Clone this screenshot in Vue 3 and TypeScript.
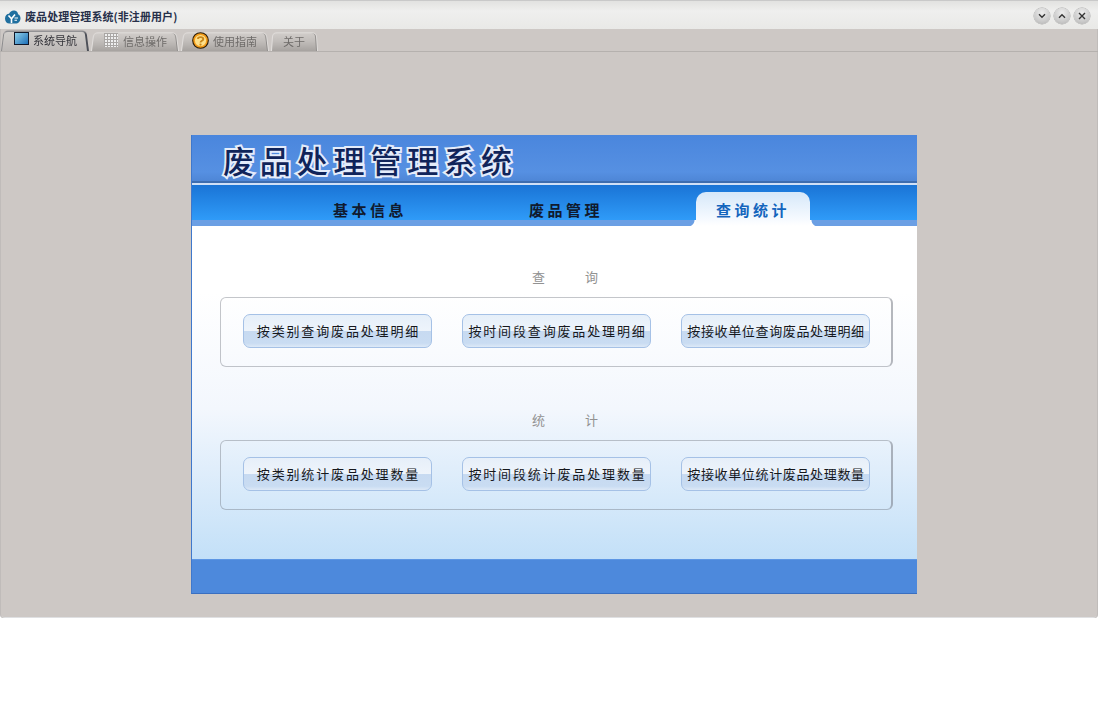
<script setup lang="ts">
interface Tab { label: string; icon: string; active?: boolean }
const tabs: Tab[] = [
  { label: '系统导航', icon: 'screen', active: true },
  { label: '信息操作', icon: 'grid' },
  { label: '使用指南', icon: 'help' },
  { label: '关于', icon: '' },
]
const navs = [
  { label: '基本信息', active: false },
  { label: '废品管理', active: false },
  { label: '查询统计', active: true },
]
const groups = [
  { title: ['查', '询'], items: ['按类别查询废品处理明细', '按时间段查询废品处理明细', '按接收单位查询废品处理明细'] },
  { title: ['统', '计'], items: ['按类别统计废品处理数量', '按时间段统计废品处理数量', '按接收单位统计废品处理数量'] },
]
</script>

<template>
  <div class="page">
    <div class="window">
      <header class="titlebar">
        <svg class="logo" width="17" height="15" viewBox="0 0 17 15">
          <path d="M1 9.5C1 6.5 3 4.8 5 4.8C6 2.2 8.5 1 10.5 1.5C13 2 14 3.8 14 5.2C15.6 5.8 16.5 7.4 16.5 9.2C16.5 12.2 14.5 14.5 11.5 14.5H5.5C2.8 14.5 1 12.5 1 9.5Z" fill="#1f6f9f" />
          <path d="M4.5 6.5L7.5 9.8M11 5.5L7.5 9.8V14" stroke="#fff" stroke-width="1.6" fill="none" />
          <path d="M10.5 9H14M10.5 11.2H13" stroke="#fff" stroke-width="1.1" fill="none" />
        </svg>
        <span class="app-title">废品处理管理系统(非注册用户)</span>
        <div class="win-btns">
          <span class="win-btn">
            <svg width="8" height="6" viewBox="0 0 8 6"><path d="M1 1.2L4 4.2L7 1.2" fill="none" stroke="#333" stroke-width="1.4" /></svg>
          </span>
          <span class="win-btn">
            <svg width="8" height="6" viewBox="0 0 8 6"><path d="M1 4.8L4 1.8L7 4.8" fill="none" stroke="#333" stroke-width="1.4" /></svg>
          </span>
          <span class="win-btn">
            <svg width="8" height="8" viewBox="0 0 8 8"><path d="M1 1L7 7M7 1L1 7" fill="none" stroke="#333" stroke-width="1.4" /></svg>
          </span>
        </div>
      </header>

      <div class="tabstrip">
        <div v-for="t in tabs" :key="t.label" class="tab" :class="{ on: t.active, plain: !t.icon }">
          <span v-if="t.icon === 'screen'" class="ic-screen"></span>
          <span v-else-if="t.icon === 'grid'" class="ic-grid"></span>
          <svg v-else-if="t.icon === 'help'" class="ic-help" width="17" height="17" viewBox="0 0 17 17">
            <circle cx="8.5" cy="8.5" r="7.8" fill="#f39c1a" stroke="#2a1c08" stroke-width="1.1" />
            <circle cx="8.5" cy="8.5" r="5.6" fill="#fde08a" />
            <path d="M5.8 6.8C6 4.6 11.2 4.4 11.3 7C11.4 8.8 8.5 8.6 8.5 10.4" fill="none" stroke="#c8861a" stroke-width="1.9" />
            <circle cx="8.5" cy="12.6" r="1.1" fill="#c8861a" />
          </svg>
          <span class="tab-text">{{ t.label }}</span>
        </div>
      </div>

      <main class="stage">
        <section class="panel">
          <div class="banner">
            <h1 class="banner-title">废品处理管理系统</h1>
          </div>
          <nav class="nav">
            <div v-for="n in navs" :key="n.label" class="nav-item" :class="{ on: n.active }">{{ n.label }}</div>
          </nav>
          <div class="body">
            <div v-for="g in groups" :key="g.title[0]" class="group">
              <div class="group-title"><span>{{ g.title[0] }}</span><span>{{ g.title[1] }}</span></div>
              <div class="box">
                <button v-for="b in g.items" :key="b" class="act" :class="{ tight: b.length > 12 }" type="button">{{ b }}</button>
              </div>
            </div>
          </div>
          <div class="foot"></div>
        </section>
      </main>
    </div>
  </div>
</template>

<style>
html, body { margin: 0; background: #fff; }
</style>

<style scoped>
.page {
  width: 1098px;
  height: 711px;
  overflow: hidden;
  background: #fff;
  font-family: "Noto Sans CJK SC", "Liberation Sans", sans-serif;
}
.window {
  height: 618px;
  display: flex;
  flex-direction: column;
  background: #cdc8c5;
  border-radius: 0 0 4px 4px;
  box-shadow: inset 1px 0 0 #c0bcba, inset -1px 0 0 #c0bcba, inset 0 -1px 0 #dfe0e2;
  box-sizing: border-box;
}
.titlebar {
  height: 29px;
  flex: none;
  display: flex;
  align-items: center;
  padding: 0 8px 0 4px;
  box-sizing: border-box;
  background: linear-gradient(#e2e2e0, #efefee 35%, #e9e9e7);
  border-top: 1px solid #c9c9c9;
}
.logo { margin-top: 3px; margin-right: 4px; }
.app-title {
  font-size: 11px;
  font-weight: 700;
  color: #27304a;
  line-height: 16px;
  margin-top: 1px;
  letter-spacing: 0.07px;
}
.win-btns { margin-left: auto; display: flex; gap: 4px; margin-top: 2px; }
.win-btn {
  width: 16px;
  height: 16px;
  border-radius: 50%;
  display: flex;
  align-items: center;
  justify-content: center;
  background: radial-gradient(circle at 50% 30%, #eeeeee, #c6c6c6 70%, #a4a4a4);
  box-shadow: 0 0 0 0.5px #a8a8a8;
}
.tabstrip {
  height: 23px;
  flex: none;
  display: flex;
  align-items: flex-end;
  gap: 2px;
  padding-left: 1px;
  box-sizing: border-box;
  border-bottom: 1px solid #b5b1ae;
}
.tab {
  position: relative;
  z-index: 0;
  height: 20px;
  width: 88px;
  flex: none;
  display: flex;
  align-items: center;
  gap: 5px;
  padding-left: 13px;
  box-sizing: border-box;
}
.tab::before {
  content: "";
  position: absolute;
  inset: 0;
  z-index: -1;
  box-sizing: border-box;
  background: linear-gradient(#d0ccc9, #c2bebb 45%, #a7a3a0);
  border-top: 1px solid #e8e5e3;
  border-left: 1px solid #e2dfdd;
  border-right: 1px solid #e0dddb;
  box-shadow: inset -1px 0 0 #8f8c8a;
  border-radius: 5px 5px 0 0;
  transform: perspective(60px) rotateX(10deg);
  transform-origin: bottom;
}
.tab.on {
  height: 22px;
  gap: 4px;
  padding-left: 13px;
}
.tab.on::before {
  background: linear-gradient(#d2cfcc, #bdb9b7);
  border-top: 1px solid #55585f;
  border-left: 1px solid #8a8a8c;
  border-right: 2px solid #4d5058;
  box-shadow: none;
}
.tab:nth-child(3) { padding-left: 11px; gap: 4px; }
.tab:nth-child(4) { width: 47px; padding-left: 12px; }
.tab-text { font-size: 11px; line-height: 14px; color: #6e6b69; white-space: nowrap; }
.tab.on .tab-text { color: #34343a; }
.ic-screen {
  width: 15px;
  height: 13px;
  margin-top: -3px;
  box-sizing: border-box;
  border: 1.5px solid #10182a;
  background: linear-gradient(135deg, #8fd0ea, #1d6fb8);
}
.ic-grid {
  width: 14px;
  height: 14px;
  margin-top: -2px;
  background-color: #efefef;
  background-image:
    linear-gradient(#a9a6a4 1px, transparent 1px),
    linear-gradient(90deg, #a9a6a4 1px, transparent 1px);
  background-size: 3px 3px;
}
.ic-help { margin-top: -2px; }
.stage {
  flex: 1;
  min-height: 0;
  padding: 83px 0 0 191px;
  box-sizing: border-box;
}
.panel {
  width: 726px;
  height: 459px;
  display: flex;
  flex-direction: column;
  box-sizing: border-box;
  border-left: 1px solid #3f78cc;
  border-bottom: 1px solid #3a6fc0;
}
.banner {
  height: 48px;
  flex: none;
  box-sizing: border-box;
  padding-left: 31px;
  background: linear-gradient(#4a86dd, #5690e2 80%, #4e86d6);
  border-bottom: 2px solid #3d6db0;
}
.banner-title {
  margin: 0;
  font-size: 31px;
  line-height: 50px;
  font-weight: 500;
  letter-spacing: 5.85px;
  white-space: nowrap;
  color: #10245a;
  -webkit-text-stroke: 4px #e4ecfa;
  paint-order: stroke fill;
}
.nav {
  height: 43px;
  flex: none;
  display: flex;
  align-items: flex-end;
  box-sizing: border-box;
  border-top: 2px solid #cfe0f7;
  background: linear-gradient(#1a74d6 0, #2f9bf8 35px, #6b9fe4 35px, #6b9fe4 100%);
  padding-left: 80px;
}
.nav-item {
  width: 196px;
  height: 34px;
  line-height: 36px;
  text-align: center;
  font-size: 15px;
  font-weight: 700;
  letter-spacing: 3.5px;
  color: #101a2e;
  box-sizing: border-box;
  white-space: nowrap;
}
.nav-item.on {
  position: relative;
  width: 114px;
  margin-left: 32px;
  color: #1465bd;
  border-radius: 10px 10px 0 0;
  background: linear-gradient(#d6e8f9, #f6faff 80%, #fff);
}
.nav-item.on::before,
.nav-item.on::after {
  content: "";
  position: absolute;
  bottom: 0;
  width: 8px;
  height: 6px;
}
.nav-item.on::before {
  left: -8px;
  background: radial-gradient(circle at 0 0, transparent 6px, #fff 7px);
}
.nav-item.on::after {
  right: -8px;
  background: radial-gradient(circle at 100% 0, transparent 6px, #fff 7px);
}
.body {
  flex: 1;
  min-height: 0;
  display: flex;
  flex-direction: column;
  gap: 43px;
  box-sizing: border-box;
  padding: 41px 24px 0 28px;
  background: linear-gradient(#fff 0, #fff 20%, #f3f7fd 55%, #c3e0f8 100%);
}
.group-title {
  height: 20px;
  display: flex;
  justify-content: center;
  gap: 40px;
  font-size: 13px;
  line-height: 20px;
  color: #929292;
  padding-bottom: 10px;
  padding-left: 17px;
}
.box {
  height: 70px;
  box-sizing: border-box;
  display: flex;
  align-items: flex-start;
  gap: 30px;
  padding: 16px 0 0 22px;
  border: 1px solid rgba(110, 115, 125, 0.4);
  border-right: 2px solid rgba(110, 115, 125, 0.5);
  border-radius: 6px;
}
.act {
  width: 189px;
  height: 34px;
  padding: 0 0 0 2px;
  box-sizing: border-box;
  border: 1px solid #a5c1e6;
  border-radius: 7px;
  background: linear-gradient(#e6eff9 0, #eef4fb 50%, #c7daf1 50%, #c9dcf2 88%, #dde9f7 100%);
  font-family: inherit;
  font-size: 13px;
  line-height: 30px;
  letter-spacing: 1.85px;
  color: #16181d;
  white-space: nowrap;
  text-align: center;
}
.act.tight { letter-spacing: 0.65px; padding-left: 1px; }
.foot {
  height: 34px;
  flex: none;
  background: #4d89dc;
  border-top: 1px solid #5d96e4;
  box-sizing: border-box;
}
</style>
